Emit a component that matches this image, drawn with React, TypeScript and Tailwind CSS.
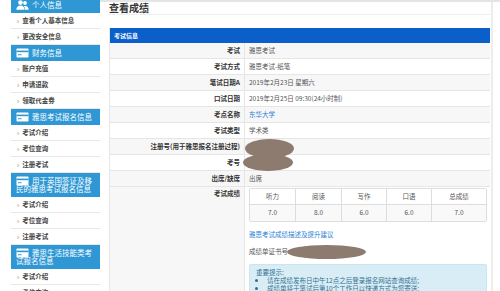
import React from 'react';

type Group = { title: string; icon: 'user' | 'card'; items: string[] };

const groups: Group[] = [
  { title: '个人信息', icon: 'user', items: ['查看个人基本信息', '更改安全信息'] },
  { title: '财务信息', icon: 'card', items: ['账户充值', '申请退款', '领取代金券'] },
  { title: '雅思考试报名信息', icon: 'card', items: ['考试介绍', '考位查询', '注册考试'] },
  { title: '用于英国签证及移民的雅思考试报名信息', icon: 'card', items: ['考试介绍', '考位查询', '注册考试'] },
  { title: '雅思生活技能类考试报名信息', icon: 'card', items: ['考试介绍', '考位查询'] },
];

const rows: { label: string; value?: string; link?: boolean; blob?: 'a' | 'b' }[] = [
  { label: '考试', value: '雅思考试' },
  { label: '考试方式', value: '雅思考试-纸笔' },
  { label: '笔试日期A', value: '2019年2月23日 星期六' },
  { label: '口试日期', value: '2019年2月25日 09:30(24小时制)' },
  { label: '考点名称', value: '东华大学', link: true },
  { label: '考试类型', value: '学术类' },
  { label: '注册号(用于雅思报名注册过程)', blob: 'a' },
  { label: '考号', blob: 'b' },
  { label: '出席/缺席', value: '出席' },
];

const scores = [
  ['听力', '7.0'],
  ['阅读', '8.0'],
  ['写作', '6.0'],
  ['口语', '6.0'],
  ['总成绩', '7.0'],
];

function UserIcon() {
  return (
    <svg width="13" height="10" viewBox="0 0 13 10" className="block -mt-[1px] overflow-visible">
      <circle cx="4.5" cy="2.6" r="2.3" fill="white" />
      <path d="M0.3 9.8c0-2.8 1.8-4.4 4.2-4.4s4.2 1.6 4.2 4.4z" fill="white" />
      <circle cx="9" cy="3" r="1.9" fill="white" />
      <path d="M9.2 9.8h3.5c0-2.4-1.4-3.8-3.4-3.8-0.6 0-1.1 0.1-1.5 0.3 0.9 0.8 1.4 2 1.4 3.5z" fill="white" />
    </svg>
  );
}

function CardIcon() {
  return (
    <svg width="13" height="10" viewBox="0 0 13 10" className="block -mt-[1px] overflow-visible">
      <rect x="0.5" y="0.5" width="12" height="9" rx="0.8" fill="white" />
      <rect x="0.5" y="2.6" width="12" height="1.6" fill="#2f98d4" />
      <rect x="2" y="6.2" width="3.5" height="1" fill="#2f98d4" />
    </svg>
  );
}

function Sidebar() {
  return (
    <div className="w-[100px] shrink-0 pl-[11px] -mt-[3px]">
      {groups.map((g, gi) => (
        <div key={gi}>
          <div className="bg-[#2f98d4] text-white text-[7.5px] leading-[8px] px-[5px] py-[4px] flow-root">
            <span className="float-left h-[8px] mr-[3px]">
              {g.icon === 'user' ? <UserIcon /> : <CardIcon />}
            </span>
            {g.title}
          </div>
          {g.items.map((it, ii) => (
            <div
              key={ii}
              className="h-[16px] flex items-center pl-[6px] border-b border-[#e8e8e8] text-[6.5px] font-bold text-[#444]"
            >
              <span className="text-[7px] font-normal text-[#777] mr-[3px]">›</span>
              {it}
            </div>
          ))}
        </div>
      ))}
    </div>
  );
}

function Blob({ kind }: { kind: 'a' | 'b' }) {
  if (kind === 'a') {
    return <span className="absolute left-0 top-[0px] w-[49px] h-[19px] rounded-[50%] bg-[#8e7b70]" />;
  }
  return <span className="absolute -left-[2px] top-[-1px] w-[50px] h-[17px] rounded-[50%] bg-[#8e7b70]" />;
}

export default function App() {
  return (
    <div className="w-[500px] h-[291px] overflow-hidden flex bg-white font-['Noto_Sans_CJK_SC',sans-serif]">
      <Sidebar />
      <div className="flex-1 border-t-[2px] border-[#e4e4e4]">
        <div className="w-[393px] h-full border-r-[2px] border-[#ececec] pl-[9px] pr-[1px]">
          <div className="h-[13px] border-b border-[#eeeeee] text-[10px] leading-[11px] font-bold text-[#333]">查看成绩</div>
          <div className="mt-[13px] border-l border-[#e6e6e6]">
            <div className="h-[15px] bg-[#0b5fcb] text-white text-[6px] font-semibold flex items-center pl-[4px]">考试信息</div>
            {rows.map((r, i) => (
              <div
                key={i}
                className={`grid grid-cols-[134px_1fr] h-[16px] border-b border-[#e6e6e6] text-[6.5px] ${i % 2 === 0 ? 'bg-[#f7f7f7]' : 'bg-white'}`}
              >
                <div className="flex items-center justify-end pr-[4px] font-bold text-[#333]">{r.label}</div>
                <div className="relative flex items-center pl-[4px] border-l border-[#e6e6e6] text-[#555]">
                  {r.blob ? <Blob kind={r.blob} /> : <span className={r.link ? 'text-[#2b7fd6]' : ''}>{r.value}</span>}
                </div>
              </div>
            ))}
            <div className="grid grid-cols-[134px_1fr] h-[110px] text-[6.5px]">
              <div className="bg-[#f7f7f7] text-right pr-[4px] pt-[2px] font-bold text-[#333]">考试成绩</div>
              <div className="border-l border-[#e6e6e6] bg-white pl-[4px] pr-[3px] pt-[1px] text-[#555]">
                <div className="grid grid-cols-[45px_46px_45px_45px_1fr] border border-[#dddddd] rounded-[2px]">
                  {scores.map(([h], i) => (
                    <div key={'h' + i} className={`h-[16px] flex items-center justify-center border-b border-[#dddddd] ${i > 0 ? 'border-l' : ''}`}>{h}</div>
                  ))}
                  {scores.map(([, v], i) => (
                    <div key={'v' + i} className={`h-[16px] flex items-center justify-center bg-[#f9f9f9] border-[#dddddd] ${i > 0 ? 'border-l' : ''}`}>{v}</div>
                  ))}
                </div>
                <div className="mt-[8px] text-[#2b7fd6] leading-[8px]">雅思考试成绩描述及提升建议</div>
                <div className="relative mt-[9px] h-[10px] flex items-center">
                  成绩单证书号:
                  <span className="absolute left-[38px] -top-[2px] w-[79px] h-[14px] rounded-[50%] bg-[#8e7b70]" />
                </div>
                <div className="mt-[7px] bg-[#d9edf7] border border-[#c9e5f2] rounded-[2px] text-[#31708f] px-[6px] pt-[3px] pb-[4px] leading-[8px]">
                  <div>重要提示:</div>
                  <ul className="list-disc pl-[11px]">
                    <li>请在成绩发布日中午12点之后登录报名网站查询成绩;</li>
                    <li>成绩单将于笔试后第10个工作日以快递方式为您寄送;</li>
                  </ul>
                </div>
              </div>
            </div>
          </div>
        </div>
      </div>
    </div>
  );
}
